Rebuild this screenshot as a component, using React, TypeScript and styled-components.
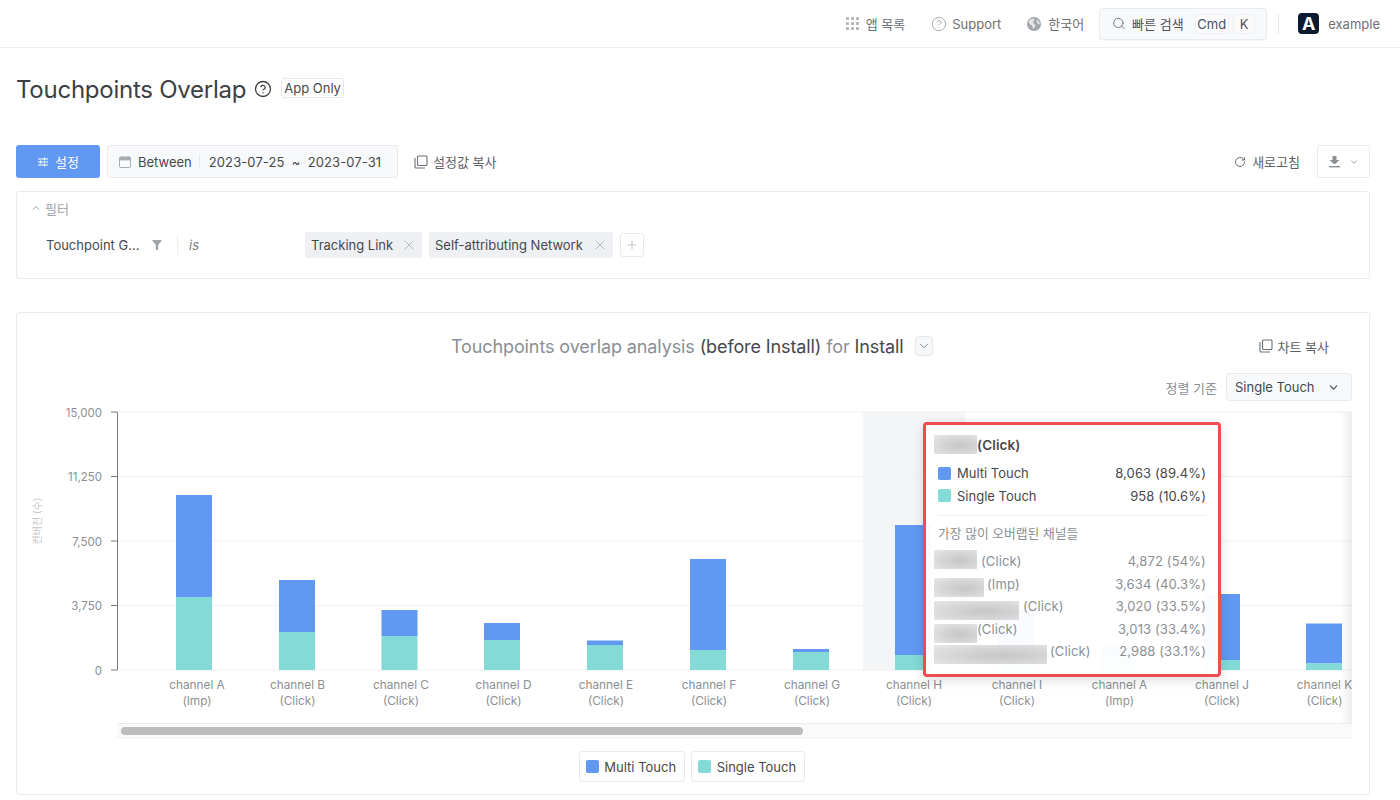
import React from "react";
import styled, { createGlobalStyle } from "styled-components";
import { CircleHelp, Search, RotateCw, ChevronDown, ChevronUp, X, Plus } from "lucide-react";

const Global = createGlobalStyle`
  html, body { margin: 0; padding: 0; background: #fff; overflow: hidden; }
  body { font-family: Inter, "Noto Sans CJK KR", sans-serif; color: #3c4043; }
  * { box-sizing: border-box; }
`;

const Header = styled.header`
  height: 48px;
  border-bottom: 1px solid #eceef0;
  padding-right: 20px;
  display: flex;
  justify-content: flex-end;
  align-items: center;
  font-size: 13px;
  color: #6c7177;
`;
const NavItem = styled.div<{ $mr: number; $gap: number }>`
  display: flex;
  align-items: center;
  gap: ${(p) => p.$gap}px;
  margin-right: ${(p) => p.$mr}px;
  white-space: nowrap;
`;
const SearchBox = styled.div`
  width: 168px;
  height: 32px;
  margin-right: 11px;
  padding: 0 7px 0 12px;
  display: flex;
  align-items: center;
  background: #f8f9fb;
  border: 1px solid #e9ebee;
  border-radius: 3px;
  box-shadow: 0 1px 1px rgba(0, 0, 0, 0.03);
  color: #4d5258;
`;
const SearchLabel = styled.span`
  margin-left: 6px;
  margin-right: 11px;
  white-space: nowrap;
`;
const Kbd = styled.span<{ $w: number }>`
  width: ${(p) => p.$w}px;
  height: 20px;
  margin-right: 4px;
  display: flex;
  align-items: center;
  justify-content: center;
  background: #fbfbfc;
  border: 1px solid #eef0f2;
  border-radius: 3px;
  color: #4d5258;
`;
const VLine = styled.div`
  width: 1px;
  height: 20px;
  background: #e6e8ea;
  margin-right: 19px;
`;
const Logo = styled.div`
  width: 21px;
  height: 21px;
  margin-right: 9px;
  border-radius: 4px;
  background: #0c1a30;
  color: #fff;
  font-size: 18px;
  font-weight: 700;
  line-height: 21px;
  text-align: center;
`;

const Body = styled.main`
  padding: 0 30px 0 16px;
`;
const TitleRow = styled.div`
  height: 34px;
  margin-top: 24px;
  display: flex;
  align-items: center;
`;
const Title = styled.h1`
  margin: 0 8px 0 0;
  font-size: 24px;
  font-weight: 400;
  letter-spacing: -0.25px;
  color: #3c4043;
  white-space: nowrap;
`;
const Badge = styled.span`
  margin-left: 9px;
  margin-bottom: 3px;
  height: 20px;
  padding: 0 2px;
  display: flex;
  align-items: center;
  font-size: 13px;
  color: #45494e;
  border: 1px solid #e6e8ea;
  border-radius: 3px;
`;

const Toolbar = styled.div`
  height: 33px;
  margin-top: 39px;
  display: flex;
  align-items: center;
  font-size: 13px;
`;
const PrimaryButton = styled.button`
  width: 84px;
  height: 33px;
  margin-right: 7px;
  border: none;
  border-radius: 3px;
  background: #6098f2;
  color: #fff;
  font: inherit;
  display: flex;
  align-items: center;
  justify-content: center;
  gap: 6px;
`;
const DateBox = styled.div`
  width: 291px;
  height: 33px;
  padding: 0 14px 0 11px;
  display: flex;
  align-items: center;
  background: #f8f9fb;
  border: 1px solid #e9ebee;
  border-radius: 3px;
  color: #45494e;
  white-space: nowrap;
`;
const DateMode = styled.span`
  margin-left: 7px;
  padding-right: 7px;
  border-right: 1px solid #e6e8ea;
  line-height: 14px;
`;
const DateRange = styled.span`
  margin-left: 9px;
  letter-spacing: 0.1px;
  word-spacing: 3.5px;
`;
const CopyLink = styled.div`
  display: flex;
  align-items: center;
  gap: 5px;
  color: #5c6167;
  font-size: 13px;
  white-space: nowrap;
`;
const ToolbarCopy = styled(CopyLink)`
  margin-left: 16px;
`;
const Spacer = styled.div`
  flex: 1;
`;
const RefreshLink = styled(CopyLink)`
  margin-right: 17px;
  gap: 6px;
`;
const DownloadBox = styled.div`
  width: 53px;
  height: 33px;
  display: flex;
  align-items: center;
  justify-content: center;
  gap: 9px;
  border: 1px solid #e9ebee;
  border-radius: 3px;
`;

const FilterPanel = styled.section`
  height: 88px;
  margin-top: 13px;
  padding: 7px 14px 0 13px;
  border: 1px solid #e9ebee;
  border-radius: 3px;
`;
const FilterHead = styled.div`
  height: 18px;
  display: flex;
  align-items: center;
  gap: 3px;
  font-size: 13px;
  color: #a0a4aa;
`;
const FilterRow = styled.div`
  margin-top: 15px;
  height: 26px;
  padding-left: 16px;
  display: flex;
  align-items: center;
  font-size: 13px;
  color: #45494e;
`;
const FilterName = styled.span`
  width: 106px;
  white-space: nowrap;
`;
const FilterSep = styled.span`
  width: 1px;
  height: 20px;
  margin: 0 11px 0 15px;
  background: #eceef0;
`;
const FilterOp = styled.i`
  width: 116px;
  color: #7b8086;
`;
const Chip = styled.span<{ $w: number }>`
  width: ${(p) => p.$w}px;
  height: 26px;
  margin-right: 7px;
  padding: 0 5px 0 6px;
  display: flex;
  align-items: center;
  justify-content: space-between;
  background: #eff0f3;
  border-radius: 3px;
  white-space: nowrap;
`;
const AddChip = styled.span`
  width: 24px;
  height: 24px;
  display: flex;
  align-items: center;
  justify-content: center;
  border: 1px solid #e6e8ea;
  border-radius: 3px;
`;

const Card = styled.section`
  height: 483px;
  margin-top: 33px;
  padding-top: 17px;
  border: 1px solid #e9ebee;
  border-radius: 3px;
`;
const CardTitleRow = styled.div`
  height: 32px;
  display: flex;
  align-items: center;
`;
const CardTitle = styled.div`
  margin-left: 434px;
  font-size: 18px;
  letter-spacing: -0.11px;
  color: #8a8f95;
  white-space: nowrap;
`;
const Strong = styled.span`
  color: #45494e;
`;
const TitleSelect = styled.span`
  width: 18px;
  height: 20px;
  margin-left: 11px;
  display: flex;
  align-items: center;
  justify-content: center;
  background: #f6f7f9;
  border: 1px solid #e6e8ea;
  border-radius: 3px;
`;
const CardCopy = styled(CopyLink)`
  margin-left: 326px;
`;
const SortRow = styled.div`
  height: 28px;
  margin-top: 11px;
  padding-right: 17px;
  display: flex;
  justify-content: flex-end;
  align-items: center;
  gap: 9px;
  font-size: 13px;
  color: #8a8f95;
`;
const SortSelect = styled.div`
  width: 126px;
  height: 28px;
  padding: 0 11px 0 8px;
  display: flex;
  align-items: center;
  justify-content: space-between;
  background: #f8f9fb;
  border: 1px solid #e9ebee;
  border-radius: 3px;
  font-size: 13px;
  color: #45494e;
`;

const ChartFrame = styled.div`
  position: relative;
  height: 318px;
  margin-top: 4px;
  margin-right: 17px;
`;
const ChartSvg = styled.svg`
  display: block;
  width: 100%;
  height: 100%;
  font-family: Inter, "Noto Sans CJK KR", sans-serif;
`;

const Scrollbar = styled.div`
  height: 15px;
  margin-left: 100px;
  margin-right: 17px;
  padding: 3px 0 0 4px;
  background: #fafafa;
  border-top: 1px solid #eceeee;
  border-bottom: 1px solid #f2f2f2;
`;
const Thumb = styled.div`
  width: 682px;
  height: 8px;
  border-radius: 4px;
  background: #bdbdbd;
`;
const Legend = styled.div`
  height: 31px;
  margin-top: 13px;
  display: flex;
  justify-content: center;
  gap: 6px;
  padding-right: 2px;
`;
const LegendItem = styled.div`
  height: 31px;
  padding: 0 8px 0 6px;
  display: flex;
  align-items: center;
  gap: 5.5px;
  border: 1px solid #e9ebee;
  border-radius: 3px;
  font-size: 13px;
  color: #45494e;
`;
const Swatch = styled.span<{ $c: string }>`
  width: 13px;
  height: 13px;
  flex: none;
  border-radius: 2px;
  background: ${(p) => p.$c};
`;

const Tooltip = styled.div`
  position: absolute;
  left: 906px;
  top: 17px;
  width: 298px;
  height: 255px;
  padding: 10px 12px 0 8px;
  background: rgba(255, 255, 255, 0.96);
  border: 3px solid #f04c4f;
  border-radius: 4px;
  box-shadow: 0 3px 12px rgba(0, 0, 0, 0.14);
  font-size: 13px;
  letter-spacing: 0.12px;
`;
const TipHead = styled.div`
  height: 19px;
  display: flex;
  align-items: center;
  font-size: 13.5px;
  font-weight: 600;
  color: #45494e;
`;
const Blur = styled.span<{ $w: number; $top?: number }>`
  width: ${(p) => p.$w}px;
  height: 19px;
  flex: none;
  margin-top: ${(p) => p.$top ?? 0}px;
  background: radial-gradient(ellipse at 60% 55%, #c6c6c6 0%, #d6d6d6 50%, #e8e8e8 100%);
`;
const TipSeries = styled.div`
  margin-top: 8px;
  padding-left: 4px;
`;
const SeriesRow = styled.div`
  height: 22.5px;
  display: flex;
  align-items: center;
  color: #45494e;
`;
const SeriesName = styled.span`
  margin-left: 6px;
  flex: 1;
  letter-spacing: 0;
`;
const TipLine = styled.div`
  height: 1px;
  margin: 8px 0 8px 4px;
  background: #eff0f3;
`;
const TipSub = styled.div`
  height: 20px;
  padding-left: 4px;
  font-size: 12.8px;
  letter-spacing: 0;
  line-height: 20px;
  color: #8a8f95;
`;
const TipRows = styled.div`
  margin-top: 6px;
`;
const TipRow = styled.div`
  height: 22.5px;
  display: flex;
  align-items: flex-start;
  line-height: 22.5px;
  color: #8a8f95;
`;
const TipKind = styled.span<{ $gap: number }>`
  margin-left: ${(p) => p.$gap}px;
  flex: 1;
`;

const BLUE = "#6098f2";
const TEAL = "#84dad6";

const data = [
  { x: 194, l: 197, top: 495, split: 597, a: "channel A", b: "(Imp)" },
  { x: 297, l: 297.5, top: 580, split: 632, a: "channel B", b: "(Click)" },
  { x: 399.5, l: 401, top: 610, split: 636, a: "channel C", b: "(Click)" },
  { x: 502, l: 503.5, top: 623, split: 640, a: "channel D", b: "(Click)" },
  { x: 605, l: 606, top: 640.5, split: 645, a: "channel E", b: "(Click)" },
  { x: 708, l: 709, top: 559, split: 650, a: "channel F", b: "(Click)" },
  { x: 811, l: 812, top: 649, split: 652, a: "channel G", b: "(Click)" },
  { x: 913, l: 914, top: 525, split: 655, a: "channel H", b: "(Click)" },
  { x: 1016, l: 1017, top: 610, split: 650, a: "channel I", b: "(Click)" },
  { x: 1119, l: 1119.5, top: 647, split: 655, a: "channel A", b: "(Imp)" },
  { x: 1222, l: 1222, top: 594, split: 660, a: "channel J", b: "(Click)" },
  { x: 1324, l: 1324.5, top: 623.5, split: 663.5, a: "channel K", b: "(Click)" },
];
const ticks = [
  { y: 412, t: "15,000" },
  { y: 476.5, t: "11,250" },
  { y: 541, t: "7,500" },
  { y: 605.5, t: "3,750" },
  { y: 670, t: "0" },
];
const overlaps = [
  { w: 43, top: 0, gap: 4, kind: "(Click)", v: "4,872 (54%)" },
  { w: 50, top: 5, gap: 3, kind: "(Imp)", v: "3,634 (40.3%)" },
  { w: 85, top: 6, gap: 4, kind: "(Click)", v: "3,020 (33.5%)" },
  { w: 43, top: 6, gap: 0, kind: "(Click)", v: "3,013 (33.4%)" },
  { w: 113, top: 5, gap: 3, kind: "(Click)", v: "2,988 (33.1%)" },
];

const CopyIcon = () => (
  <svg width="14" height="14" viewBox="0 0 14 14" fill="none" stroke="#6c7177" strokeWidth="1.1">
    <rect x="3.5" y="1" width="9.5" height="9.5" rx="1" />
    <path d="M1 3v9a1 1 0 0 0 1 1h9" />
  </svg>
);
const AppsIcon = () => (
  <svg width="13" height="13" viewBox="0 0 13 13" fill="#b4b8bc">
    {[0, 5, 10].flatMap((x) =>
      [0, 5, 10].map((y) => <rect key={`${x}-${y}`} x={x} y={y} width="3" height="3" rx="0.4" />)
    )}
  </svg>
);
const GlobeIcon = () => (
  <svg width="14" height="14" viewBox="0 0 14 14">
    <circle cx="7" cy="7" r="7" fill="#a3a7ac" />
    <path d="M3 2.5 6.5 1.6 7.8 3 6 4.6 6.4 6.4 8.6 7.4 7.7 10.6 6 12 5 8.6 2.4 6.8 1.6 5Z" fill="#e3e5e7" />
    <path d="M10 2.6 12.4 5 12.6 7.6 10.8 7 9.6 5Z" fill="#e3e5e7" />
  </svg>
);
const SlidersIcon = () => (
  <svg width="12" height="12" viewBox="0 0 12 12" fill="none" stroke="#fff" strokeWidth="1.2">
    <path d="M1 3h10M1 6h10M1 9h10" />
    <path d="M7.5 1.5v3M3.5 4.5v3M7.5 7.5v3" />
  </svg>
);
const CalendarIcon = () => (
  <svg width="12" height="12" viewBox="0 0 12 12" fill="none">
    <rect x="0.5" y="1" width="11" height="10.5" rx="1" stroke="#a9adb2" />
    <rect x="0.5" y="1" width="11" height="3.4" fill="#a9adb2" />
    <path d="M3 0v2M9 0v2" stroke="#a9adb2" />
  </svg>
);
const DownloadIcon = () => (
  <svg width="11" height="12" viewBox="0 0 11 12" fill="#8a8f95">
    <path d="M3.5 0h4v4h3L5.5 8.6.5 4h3Z" />
    <rect x="0" y="10" width="11" height="1.4" />
  </svg>
);
const FunnelIcon = () => (
  <svg width="10" height="10" viewBox="0 0 10 10" fill="#a0a4aa">
    <path d="M0 0h10L6.2 5v5H3.8V5Z" />
  </svg>
);

export default function App() {
  return (
    <>
      <Global />
      <Header>
        <NavItem $mr={26} $gap={7}>
          <AppsIcon />
          앱 목록
        </NavItem>
        <NavItem $mr={26} $gap={5}>
          <CircleHelp size={16} color="#a0a4aa" strokeWidth={1.4} />
          Support
        </NavItem>
        <NavItem $mr={15} $gap={7}>
          <GlobeIcon />
          한국어
        </NavItem>
        <SearchBox>
          <Search size={15} color="#6c7177" strokeWidth={1.6} />
          <SearchLabel>빠른 검색</SearchLabel>
          <Kbd $w={37}>Cmd</Kbd>
          <Kbd $w={24}>K</Kbd>
        </SearchBox>
        <VLine />
        <Logo>A</Logo>
        example
      </Header>
      <Body>
        <TitleRow>
          <Title>Touchpoints Overlap</Title>
          <CircleHelp size={18} color="#3c4043" strokeWidth={1.7} />
          <Badge>App Only</Badge>
        </TitleRow>
        <Toolbar>
          <PrimaryButton>
            <SlidersIcon />
            설정
          </PrimaryButton>
          <DateBox>
            <CalendarIcon />
            <DateMode>Between</DateMode>
            <DateRange>2023-07-25 ~ 2023-07-31</DateRange>
          </DateBox>
          <ToolbarCopy>
            <CopyIcon />
            설정값 복사
          </ToolbarCopy>
          <Spacer />
          <RefreshLink>
            <RotateCw size={12} color="#5c6167" strokeWidth={1.8} />
            새로고침
          </RefreshLink>
          <DownloadBox>
            <DownloadIcon />
            <ChevronDown size={10} color="#8a8f95" />
          </DownloadBox>
        </Toolbar>
        <FilterPanel>
          <FilterHead>
            <ChevronUp size={12} color="#a0a4aa" />
            필터
          </FilterHead>
          <FilterRow>
            <FilterName>Touchpoint G...</FilterName>
            <FunnelIcon />
            <FilterSep />
            <FilterOp>is</FilterOp>
            <Chip $w={117}>
              Tracking Link
              <X size={16} color="#a0a4aa" strokeWidth={1.1} />
            </Chip>
            <Chip $w={184}>
              Self-attributing Network
              <X size={16} color="#a0a4aa" strokeWidth={1.1} />
            </Chip>
            <AddChip>
              <Plus size={14} color="#b4b8bc" strokeWidth={1.4} />
            </AddChip>
          </FilterRow>
        </FilterPanel>
        <Card>
          <CardTitleRow>
            <CardTitle>
              Touchpoints overlap analysis <Strong>(before Install)</Strong> for <Strong>Install</Strong>
            </CardTitle>
            <TitleSelect>
              <ChevronDown size={14} color="#7b8086" strokeWidth={1.6} />
            </TitleSelect>
            <CardCopy>
              <CopyIcon />
              차트 복사
            </CardCopy>
          </CardTitleRow>
          <SortRow>
            정렬 기준
            <SortSelect>
              Single Touch
              <ChevronDown size={13} color="#45494e" />
            </SortSelect>
          </SortRow>
          <ChartFrame>
            <ChartSvg viewBox="17 405 1335 318">
              <defs>
                <linearGradient id="edge" x1="0" x2="1" y1="0" y2="0">
                  <stop offset="0" stopColor="#000" stopOpacity="0" />
                  <stop offset="1" stopColor="#000" stopOpacity="0.07" />
                </linearGradient>
              </defs>
              <rect x="863" y="412" width="102" height="258" fill="#f4f5f7" />
              {ticks.map((t) => (
                <g key={t.t}>
                  <line x1="117" x2="1352" y1={t.y} y2={t.y} stroke="#f0f1f3" />
                  <line x1="111" x2="117" y1={t.y} y2={t.y} stroke="#77797c" />
                  <text x="102" y={t.y + 4.5} textAnchor="end" fontSize="11.5" fill="#8a8f95">
                    {t.t}
                  </text>
                </g>
              ))}
              <line x1="117.5" x2="117.5" y1="412" y2="670" stroke="#77797c" />
              <text
                transform="translate(41 521) rotate(-90)"
                textAnchor="middle"
                fontSize="10"
                fill="#c4c7cb"
              >
                컨버전 (수)
              </text>
              {data.map((d) => (
                <g key={d.x}>
                  <rect x={d.x - 18} y={d.top} width="36" height={d.split - d.top} fill={BLUE} />
                  <rect x={d.x - 18} y={d.split} width="36" height={670 - d.split} fill={TEAL} />
                  <text x={d.l} y="689" textAnchor="middle" fontSize="11.8" fill="#8a8f95">
                    {d.a}
                  </text>
                  <text x={d.l} y="705" textAnchor="middle" fontSize="11.8" fill="#8a8f95">
                    {d.b}
                  </text>
                </g>
              ))}
              <rect x="1340" y="412" width="12" height="311" fill="url(#edge)" />
            </ChartSvg>
            <Tooltip>
              <TipHead>
                <Blur $w={43} />
                (Click)
              </TipHead>
              <TipSeries>
                <SeriesRow>
                  <Swatch $c={BLUE} />
                  <SeriesName>Multi Touch</SeriesName>
                  8,063 (89.4%)
                </SeriesRow>
                <SeriesRow>
                  <Swatch $c={TEAL} />
                  <SeriesName>Single Touch</SeriesName>
                  958 (10.6%)
                </SeriesRow>
              </TipSeries>
              <TipLine />
              <TipSub>가장 많이 오버랩된 채널들</TipSub>
              <TipRows>
                {overlaps.map((o) => (
                  <TipRow key={o.v}>
                    <Blur $w={o.w} $top={o.top} />
                    <TipKind $gap={o.gap}>{o.kind}</TipKind>
                    {o.v}
                  </TipRow>
                ))}
              </TipRows>
            </Tooltip>
          </ChartFrame>
          <Scrollbar>
            <Thumb />
          </Scrollbar>
          <Legend>
            <LegendItem>
              <Swatch $c={BLUE} />
              Multi Touch
            </LegendItem>
            <LegendItem>
              <Swatch $c={TEAL} />
              Single Touch
            </LegendItem>
          </Legend>
        </Card>
      </Body>
    </>
  );
}
